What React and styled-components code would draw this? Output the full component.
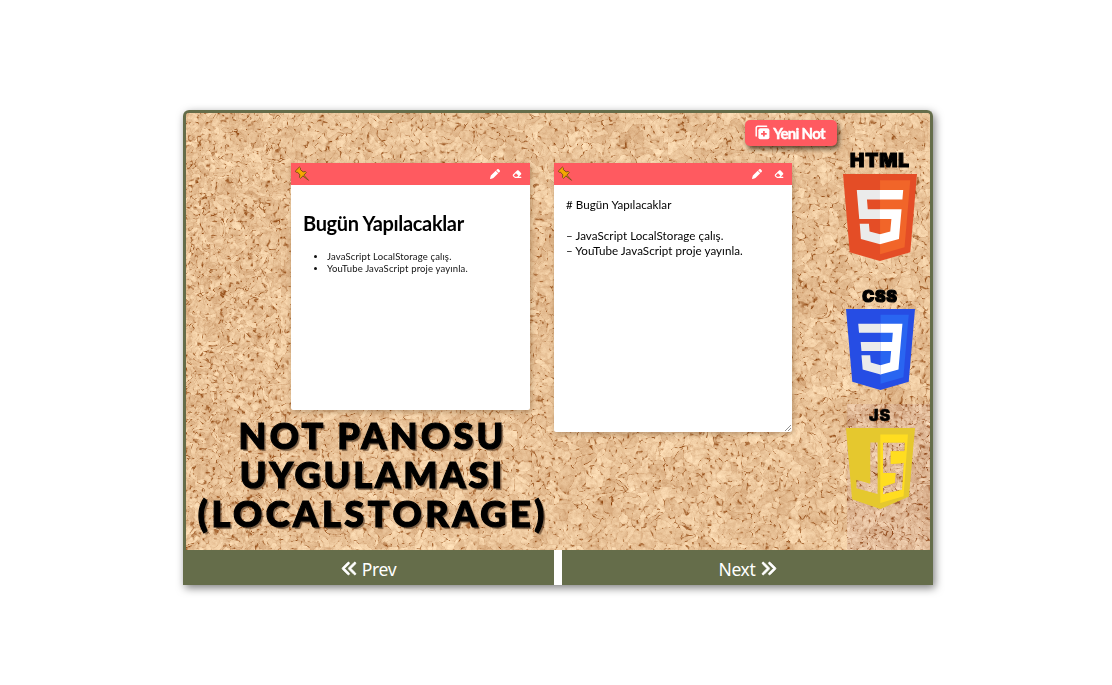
import React, { useLayoutEffect, useRef } from 'react';
import styled, { createGlobalStyle } from 'styled-components';
import { FaAnglesLeft, FaAnglesRight, FaEraser, FaPen } from 'react-icons/fa6';

const GlobalStyle = createGlobalStyle`
  * { box-sizing: border-box; }
  body { margin: 0; background: #fff; }
`;

const Page = styled.main`
  display: flex;
  justify-content: center;
  width: 1112px;
  height: 685px;
  padding: 110px 0 0 4px;
`;

const Card = styled.section`
  display: flex;
  flex-direction: column;
  width: 750px;
  height: 475px;
  border-radius: 6px 6px 0 0;
  background: #fff;
  box-shadow: 2px 3px 8px rgba(0, 0, 0, 0.5);
`;

const Slide = styled.div`
  position: relative;
  display: flex;
  gap: 6px;
  height: 440px;
  border: 3px solid #656d4a;
  border-bottom: 0;
  border-radius: 6px 6px 0 0;
  overflow: hidden;
  background: #e3b98b;
`;

const CorkCanvas = styled.canvas`
  position: absolute;
  inset: 0;
`;

const Main = styled.div`
  position: relative;
  display: flex;
  flex-direction: column;
  width: 651px;
  flex: none;
`;

const TopBar = styled.div`
  display: flex;
  justify-content: flex-end;
  height: 50px;
  padding-top: 7px;
`;

const NewNote = styled.button`
  display: flex;
  align-items: center;
  justify-content: center;
  gap: 3px;
  width: 92px;
  height: 26px;
  padding: 0 2px 1px 0;
  border: 0;
  border-radius: 5px;
  background: #ff5a60;
  color: #fff;
  font: 700 15px 'Lato', sans-serif;
  letter-spacing: -0.7px;
  -webkit-text-stroke: 0.4px #fff;
  white-space: nowrap;
  box-shadow: 2px 3px 5px rgba(40, 25, 10, 0.75);
`;

const Columns = styled.div`
  display: flex;
  align-items: flex-start;
`;

const LeftColumn = styled.div`
  display: flex;
  flex-direction: column;
  align-items: center;
  width: 368px;
`;

const NoteCard = styled.article`
  width: ${(p) => p.$width}px;
  height: ${(p) => p.$height}px;
  margin-left: ${(p) => p.$indent || 0}px;
  border-radius: 0 0 2px 2px;
  background: #fff;
  box-shadow: 1px 2px 5px rgba(90, 55, 20, 0.35);
`;

const NoteHeader = styled.header`
  display: flex;
  align-items: center;
  height: 22px;
  padding: 0 8px 0 3px;
  background: #ff5a60;
  color: #fff;
`;

const NoteActions = styled.span`
  display: flex;
  gap: 12px;
  margin-left: auto;
`;

const Rendered = styled.div`
  padding: 26px 12px 0;
  color: #111;
  font-family: 'Lato', sans-serif;
`;

const NoteTitle = styled.h2`
  margin: 0;
  font-size: 20px;
  line-height: 24px;
  font-weight: 700;
  letter-spacing: -0.34px;
  color: #000;
  white-space: nowrap;
`;

const NoteList = styled.ul`
  margin: 16px 0 0;
  padding-left: 24px;
  font-size: 9.5px;
  line-height: 12px;
  letter-spacing: 0.15px;
  white-space: nowrap;
`;

const Source = styled.div`
  position: relative;
  height: 247px;
  padding: 12px;
  color: #000;
  font: 11.6px/15.4px 'Lato', sans-serif;
  letter-spacing: 0.05px;
  white-space: pre;
`;

const Grip = styled.svg`
  position: absolute;
  right: 1px;
  bottom: 1px;
`;

const Headline = styled.h1`
  margin: 6px 0 0 2px;
  color: #000;
  font: 900 36px/39px 'Lato', sans-serif;
  text-align: center;
  white-space: nowrap;
  text-shadow: 2px 2px 1px rgba(70, 45, 25, 0.65);
  -webkit-text-stroke: 1.2px #000;
`;

const HeadlineRow = styled.span`
  display: block;
  letter-spacing: ${(p) => p.$spacing}px;
  margin-right: -${(p) => p.$spacing}px;
`;

const Logos = styled.aside`
  position: relative;
  display: flex;
  flex-direction: column;
  align-items: center;
  width: 74px;
  padding-top: 39px;
`;

const LogoItem = styled.div`
  display: flex;
  flex-direction: column;
  align-items: center;
  margin-bottom: ${(p) => p.$after}px;
`;

const LogoLabel = styled.span`
  height: ${(p) => p.$height}px;
  color: #000;
  font: 900 ${(p) => p.$size}px/18px 'Inter', sans-serif;
  letter-spacing: ${(p) => p.$spacing}px;
  -webkit-text-stroke: ${(p) => p.$stroke}px #000;
`;

const Nav = styled.nav`
  display: flex;
  gap: 8px;
  height: 35px;
`;

const NavButton = styled.button`
  display: flex;
  flex: 0 0 371px;
  align-items: center;
  justify-content: center;
  gap: 4px;
  padding: 2px 0 0;
  border: 0;
  background: #656d4a;
  color: #fff;
  font: 17.5px 'Noto Sans', sans-serif;
  letter-spacing: -0.3px;

  svg {
    stroke: #fff;
    stroke-width: 22px;
    overflow: visible;
    margin-top: -1px;
  }
`;

const hash = (x, y, k) => {
  let h = Math.imul(x, 374761393) + Math.imul(y, 668265263) + Math.imul(k, 974634777);
  h = Math.imul(h ^ (h >>> 13), 1274126177);
  h = Math.imul(h ^ (h >>> 15), 2246822519);
  return ((h ^ (h >>> 16)) >>> 0) / 4294967296;
};

const smooth = (x, y, k) => {
  const ix = Math.floor(x);
  const iy = Math.floor(y);
  const fx = x - ix;
  const fy = y - iy;
  const a = hash(ix, iy, k) * (1 - fx) + hash(ix + 1, iy, k) * fx;
  const b = hash(ix, iy + 1, k) * (1 - fx) + hash(ix + 1, iy + 1, k) * fx;
  return a * (1 - fy) + b * fy;
};

// Cork granules: a cellular pattern with tinted chips and dark gaps.
function paintCork(canvas) {
  const { width, height } = canvas;
  const ctx = canvas.getContext('2d');
  const image = ctx.createImageData(width, height);
  for (let y = 0; y < height; y += 1) {
    for (let x = 0; x < width; x += 1) {
      const corner = x > 660 && y > 290;
      const size = x < 95 || corner ? 5.5 : 8.5;
      const wx = x + (smooth(x / 4, y / 4, 11) - 0.5) * 5 + (smooth(x / 11, y / 11, 13) - 0.5) * 14;
      const wy = y + (smooth(x / 4, y / 4, 12) - 0.5) * 5 + (smooth(x / 11, y / 11, 14) - 0.5) * 14;
      const cx = Math.floor(wx / size);
      const cy = Math.floor(wy / size);
      let d1 = 99;
      let d2 = 99;
      let chip = 0;
      for (let j = -1; j <= 1; j += 1) {
        for (let i = -1; i <= 1; i += 1) {
          const gx = cx + i;
          const gy = cy + j;
          const d = Math.hypot((gx + hash(gx, gy, 1)) * size - wx, (gy + hash(gx, gy, 2)) * size - wy)
            - hash(gx, gy, 4) * 2.4;
          if (d < d1) {
            d2 = d1;
            d1 = d;
            chip = hash(gx, gy, 3);
          } else if (d < d2) {
            d2 = d;
          }
        }
      }
      const gap = Math.max(0, 1 - (d2 - d1) / 2);
      const dark = Math.max(0, smooth(x / 2.3, y / 2.3, 5) - 0.56) * 3.8;
      let v = (chip - 0.5) * 30 + (hash(x, y, 7) - 0.5) * 8 + (smooth(x / 2.5, y / 2.5, 8) - 0.5) * 28;
      v += (smooth(x / 14, y / 14, 9) - 0.5) * 16;
      v -= gap * (16 + Math.min(1, dark) * 100);
      const p = (y * width + x) * 4;
      const dull = corner ? -7 : 0;
      image.data[p] = 236 + v * 0.68 + dull;
      image.data[p + 1] = 199 + v * 0.95 + dull;
      image.data[p + 2] = 157 + v * 1.05 + (corner ? 2 : 0);
      image.data[p + 3] = 255;
    }
  }
  ctx.putImageData(image, 0, 0);
}

function Cork() {
  const ref = useRef(null);
  useLayoutEffect(() => paintCork(ref.current), []);
  return <CorkCanvas ref={ref} width={744} height={437} />;
}

function Pin() {
  return (
    <svg width="16" height="16" viewBox="0 0 16 16">
      <path
        d="M1.2 5.2 5.4 1l1.2 1.2-.5 1.1 3 2.6 2.3-.4.9 1.1-2.5 2.5 4.7 5.2-5.6-4.3-2.4 2.3-1.1-1 .5-2.4-2.6-2.9-1.1.4z"
        fill="#f5a800"
        stroke="#80511c"
        strokeWidth="1"
        strokeLinejoin="round"
      />
    </svg>
  );
}

function AddIcon() {
  return (
    <svg width="15" height="15" viewBox="0 0 15 15">
      <path d="M1.2 11V3q0-1.8 1.8-1.8h8.6" fill="none" stroke="#fff" strokeWidth="1.5" strokeLinecap="round" />
      <rect x="3.4" y="3.3" width="11" height="11" rx="2" fill="#fff" />
      <path d="M8.9 6v5.6M6.1 8.8h5.6" stroke="#ff5a60" strokeWidth="1.7" />
    </svg>
  );
}

function Header() {
  return (
    <NoteHeader>
      <Pin />
      <NoteActions>
        <FaPen size={10} />
        <FaEraser size={10} />
      </NoteActions>
    </NoteHeader>
  );
}

function HtmlShield() {
  return (
    <svg width="74" height="87" viewBox="30 0 451 512" preserveAspectRatio="none">
      <path fill="#e44d26" d="M71 460 30 0h451l-41 460-185 52z" />
      <path fill="#f16529" d="m256 472 149-41 35-394H256z" />
      <path fill="#ebebeb" d="M256 208h-75l-5-58h80V94H114l15 171h127zM256 355l-64-17-4-45h-56l7 89 117 32z" />
      <path fill="#fff" d="M255 208v57h70l-7 73-63 17v59l116-32 16-174zM255 94v56h137l5-56z" />
    </svg>
  );
}

function CssShield() {
  return (
    <svg width="69" height="81" viewBox="30 0 451 512" preserveAspectRatio="none">
      <path fill="#264de4" d="M71 460 30 0h451l-41 460-185 52z" />
      <path fill="#2965f1" d="m256 472 149-41 35-394H256z" />
      <path fill="#ebebeb" d="M126 208l5 57h125v-57zM256 94H110l5 56h141zM256 414v-59l-64-17-4-45h-57l8 89z" />
      <path fill="#fff" d="M255 94h144l-26 288-118 32v-59l63-17 7-73h-70v-57h76l5-58h-81z" />
    </svg>
  );
}

function JsShield() {
  const j = 'M105 144h22v153l-63-17v-25l41 12z';
  const s = 'M143 144h65l-1 26h-41v38l39-3-5 80-57 13v-23l35-11 2-29h-37z';
  return (
    <svg width="69" height="81" viewBox="33 101 205 241" preserveAspectRatio="none">
      <path fill="#e5c82e" fillRule="evenodd" d={`M33 101h205l-18 204-85 37-84-29z${j}${s}`} />
      <path fill="#ffdd20" fillRule="evenodd" d={`M135 120h82l-13 184-69 20z${s}`} />
    </svg>
  );
}

export default function App() {
  return (
    <Page>
      <GlobalStyle />
      <Card>
        <Slide>
          <Cork />
          <Main>
            <TopBar>
              <NewNote><AddIcon />Yeni Not</NewNote>
            </TopBar>
            <Columns>
              <LeftColumn>
                <NoteCard $width={239} $height={247} $indent={81}>
                  <Header />
                  <Rendered>
                    <NoteTitle>Bugün Yapılacaklar</NoteTitle>
                    <NoteList>
                      <li>JavaScript LocalStorage çalış.</li>
                      <li>YouTube JavaScript proje yayınla.</li>
                    </NoteList>
                  </Rendered>
                </NoteCard>
                <Headline>
                  <HeadlineRow $spacing={3.3}>NOT PANOSU</HeadlineRow>
                  <HeadlineRow $spacing={2.9}>UYGULAMASI</HeadlineRow>
                  <HeadlineRow $spacing={3.6}>(LOCALSTORAGE)</HeadlineRow>
                </Headline>
              </LeftColumn>
              <NoteCard $width={238} $height={269}>
                <Header />
                <Source>
                  {'# Bugün Yapılacaklar\n\n– JavaScript LocalStorage çalış.\n– YouTube JavaScript proje yayınla.'}
                  <Grip width="6" height="6" viewBox="0 0 6 6">
                    <path d="M0 6 6 0M3 6l3-3" stroke="#777" strokeWidth=".8" />
                  </Grip>
                </Source>
              </NoteCard>
            </Columns>
          </Main>
          <Logos>
            <LogoItem $after={26}>
              <LogoLabel $size={19} $height={22} $spacing={0.9} $stroke={1.1}>HTML</LogoLabel>
              <HtmlShield />
            </LogoItem>
            <LogoItem $after={16}>
              <LogoLabel $size={16} $height={22} $spacing={0.8} $stroke={1.2}>CSS</LogoLabel>
              <CssShield />
            </LogoItem>
            <LogoItem $after={0}>
              <LogoLabel $size={16} $height={22} $spacing={1} $stroke={0.5}>JS</LogoLabel>
              <JsShield />
            </LogoItem>
          </Logos>
        </Slide>
        <Nav>
          <NavButton><FaAnglesLeft size={17} />Prev</NavButton>
          <NavButton>Next<FaAnglesRight size={17} /></NavButton>
        </Nav>
      </Card>
    </Page>
  );
}
